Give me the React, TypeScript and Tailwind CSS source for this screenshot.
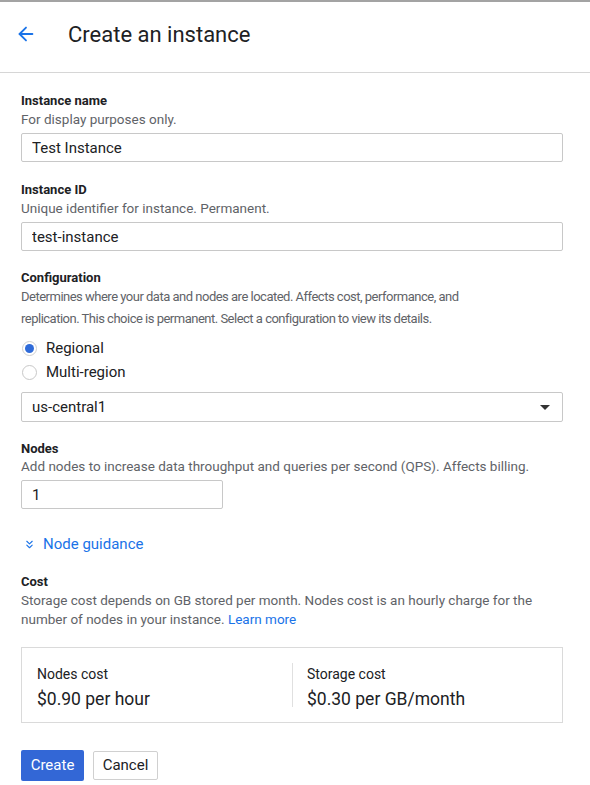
import { ArrowLeft, ChevronsDown } from "lucide-react";

export default function App() {
  return (
    <div className="w-[590px] h-[785px] bg-white overflow-hidden border-t-2 border-[#a3a3a3] text-[#202124]" style={{ fontFamily: "Roboto, 'Noto Sans', sans-serif" }}>
      <div className="h-[71px] pb-[6px] flex items-center border-b border-[#d6d6d6]">
        <div className="w-[68px] pl-[15px] flex items-center">
          <ArrowLeft className="w-[22px] h-[22px] text-[#1a73e8]" strokeWidth={2} />
        </div>
        <h1 className="text-[22px] text-[#202124]">Create an instance</h1>
      </div>

      <div className="px-[21px] w-[584px]">
        <div className="pt-[19px]">
          <div className="text-[13px] font-bold leading-[18px]">Instance name</div>
          <div className="text-[13.5px] text-[#5f6368] leading-[18px]">For display purposes only.</div>
          <input
            defaultValue="Test Instance"
            className="mt-[5px] w-full h-[29px] border border-[#c8c8c8] rounded-[2px] px-[10px] text-[15px] text-[#202124] outline-none"
          />
        </div>

        <div className="pt-[19px]">
          <div className="text-[13px] font-bold leading-[18px]">Instance ID</div>
          <div className="text-[13.5px] text-[#5f6368] leading-[18px]">Unique identifier for instance. Permanent.</div>
          <input
            defaultValue="test-instance"
            className="mt-[5px] w-full h-[29px] border border-[#c8c8c8] rounded-[2px] px-[10px] text-[15px] text-[#202124] outline-none"
          />
        </div>

        <div className="pt-[18px]">
          <div className="text-[13px] font-bold leading-[18px]">Configuration</div>
          <div className="text-[13px] text-[#5f6368] leading-[22px] mt-[-1px] tracking-[-0.5px]">
            Determines where your data and nodes are located. Affects cost, performance, and
            <br />
            replication. This choice is permanent. Select a configuration to view its details.
          </div>
          <div className="mt-[9px] flex flex-col gap-[6px]">
            <label className="flex items-center gap-[9px] h-[18px]">
              <span className="w-[15px] h-[15px] rounded-full border border-[#d0d0d0] flex items-center justify-center ml-[1px]">
                <span className="w-[9px] h-[9px] rounded-full bg-[#2f6bd9]" />
              </span>
              <span className="text-[15px]">Regional</span>
            </label>
            <label className="flex items-center gap-[9px] h-[18px]">
              <span className="w-[15px] h-[15px] rounded-full border border-[#c8c8c8] ml-[1px]" />
              <span className="text-[15px]">Multi-region</span>
            </label>
          </div>
          <div className="mt-[11px] w-full h-[30px] border border-[#c8c8c8] rounded-[2px] pl-[10px] pr-[12px] flex items-center justify-between">
            <span className="text-[15px]">us-central1</span>
            <span className="w-0 h-0 border-l-[5px] border-r-[5px] border-t-[5px] border-l-transparent border-r-transparent border-t-[#333]" />
          </div>
        </div>

        <div className="pt-[18px]">
          <div className="text-[13px] font-bold leading-[18px]">Nodes</div>
          <div className="text-[13.5px] text-[#5f6368] leading-[16px]">Add nodes to increase data throughput and queries per second (QPS). Affects billing.</div>
          <input
            defaultValue="1"
            className="mt-[6px] w-[202px] h-[29px] border border-[#c8c8c8] rounded-[2px] px-[10px] text-[15px] text-[#202124] outline-none"
          />
        </div>

        <div className="mt-[24px] flex items-center gap-[7px] text-[#1a73e8] pl-[2px]">
          <ChevronsDown className="w-[13px] h-[13px]" strokeWidth={2} />
          <span className="text-[15px]">Node guidance</span>
        </div>

        <div className="pt-[17px]">
          <div className="text-[13px] font-bold leading-[18px]">Cost</div>
          <div className="text-[13.5px] text-[#5f6368] leading-[19px]">
            Storage cost depends on GB stored per month. Nodes cost is an hourly charge for the number of nodes in your instance. <span className="text-[#1a73e8]">Learn more</span>
          </div>
        </div>

        <div className="mt-[18px] h-[76px] border border-[#dadada] flex items-center">
          <div className="w-[270px] pl-[15px] mt-[6px] flex flex-col">
            <span className="text-[14px] leading-[18px]">Nodes cost</span>
            <span className="text-[17.5px] leading-[24px] mt-[4px]">$0.90 per hour</span>
          </div>
          <div className="w-px h-[44px] bg-[#e0e0e0]" />
          <div className="pl-[14px] mt-[6px] flex flex-col">
            <span className="text-[14px] leading-[18px]">Storage cost</span>
            <span className="text-[17.5px] leading-[24px] mt-[4px]">$0.30 per GB/month</span>
          </div>
        </div>

        <div className="mt-[27px] flex items-center gap-[9px]">
          <button className="h-[31px] w-[63px] rounded-[2px] bg-[#3367d6] text-white text-[15px]">Create</button>
          <button className="h-[29px] w-[65px] rounded-[2px] border border-[#d0d0d0] bg-white text-[#202124] text-[15px]">Cancel</button>
        </div>
      </div>
    </div>
  );
}
